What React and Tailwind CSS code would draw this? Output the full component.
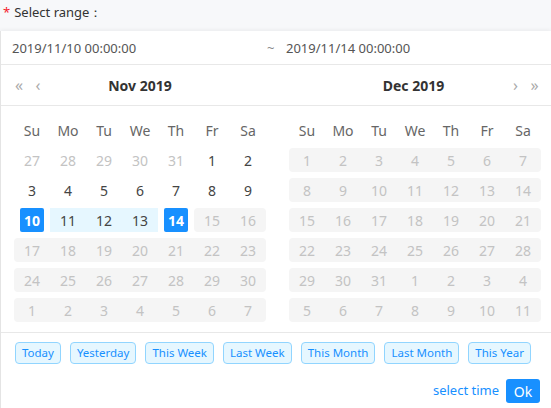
import React from 'react';

const WEEK = ['Su', 'Mo', 'Tu', 'We', 'Th', 'Fr', 'Sa'];

// cell kinds: n = normal, o = other month (light text), s = selected, r = in range, d = disabled
const nov = [
  [[27, 'o'], [28, 'o'], [29, 'o'], [30, 'o'], [31, 'o'], [1, 'n'], [2, 'n']],
  [[3, 'n'], [4, 'n'], [5, 'n'], [6, 'n'], [7, 'n'], [8, 'n'], [9, 'n']],
  [[10, 's'], [11, 'r'], [12, 'r'], [13, 'r'], [14, 's'], [15, 'd'], [16, 'd']],
  [[17, 'd'], [18, 'd'], [19, 'd'], [20, 'd'], [21, 'd'], [22, 'd'], [23, 'd']],
  [[24, 'd'], [25, 'd'], [26, 'd'], [27, 'd'], [28, 'd'], [29, 'd'], [30, 'd']],
  [[1, 'd'], [2, 'd'], [3, 'd'], [4, 'd'], [5, 'd'], [6, 'd'], [7, 'd']],
];

const decDays = [
  [1, 2, 3, 4, 5, 6, 7],
  [8, 9, 10, 11, 12, 13, 14],
  [15, 16, 17, 18, 19, 20, 21],
  [22, 23, 24, 25, 26, 27, 28],
  [29, 30, 31, 1, 2, 3, 4],
  [5, 6, 7, 8, 9, 10, 11],
];
const dec = decDays.map((r) => r.map((d) => [d, 'd']));

const shortcuts = ['Today', 'Yesterday', 'This Week', 'Last Week', 'This Month', 'Last Month', 'This Year'];

const Cell = ({ day, kind, prev, next }) => {
  if (kind === 's') {
    return (
      <div className="h-[30px] py-[3px] flex justify-center">
        <div className="w-[24px] h-[24px] rounded-[2px] bg-[#1890ff] text-white font-bold flex items-center justify-center">
          {day}
        </div>
      </div>
    );
  }
  if (kind === 'r') {
    return (
      <div className="h-[30px] py-[3px]">
        <div className="h-[24px] bg-[#e6f7ff] text-[#444] flex items-center justify-center">{day}</div>
      </div>
    );
  }
  if (kind === 'd') {
    const roundL = prev !== 'd' ? 'rounded-l-[4px]' : '';
    const roundR = next !== 'd' ? 'rounded-r-[4px]' : '';
    return (
      <div className="h-[30px] py-[3px]">
        <div className={`h-[24px] bg-[#f5f5f5] text-[#c3c3c3] flex items-center justify-center ${roundL} ${roundR}`}>
          {day}
        </div>
      </div>
    );
  }
  return (
    <div className={`h-[30px] flex items-center justify-center ${kind === 'o' ? 'text-[#c3c3c3]' : 'text-[#444]'}`}>
      {day}
    </div>
  );
};

const Calendar = ({ rows }) => (
  <div className="w-[252px]">
    <div className="grid grid-cols-7 h-[30px] text-[#666]">
      {WEEK.map((w) => (
        <div key={w} className="flex items-center justify-center">{w}</div>
      ))}
    </div>
    {rows.map((row, i) => (
      <div key={i} className="grid grid-cols-7">
        {row.map(([d, k], j) => (
          <Cell
            key={j}
            day={d}
            kind={k}
            prev={j > 0 ? row[j - 1][1] : null}
            next={j < 6 ? row[j + 1][1] : null}
          />
        ))}
      </div>
    ))}
  </div>
);

export default function App() {
  return (
    <div
      className="w-[551px] h-[408px] overflow-hidden bg-[#f7f8fa] text-[14px]"
      style={{ fontFamily: '"Noto Sans", "Open Sans", sans-serif' }}
    >
      <div className="h-[31px] flex items-center pl-[3px] pb-[6px] text-[13px] text-[#333]">
        <span className="text-[#f5222d] mr-[4px]">*</span>
        <span>Select range：</span>
      </div>

      <div className="bg-white border-l border-[#e4e4e4] h-[377px] shadow-[0_-1px_4px_rgba(0,0,0,0.06)]">
        {/* inputs */}
        <div className="h-[34px] pt-[3px] flex items-center border-b border-[#e8e8e8] text-[13px] text-[#555]">
          <span className="w-[266px] pl-[11px]">2019/11/10 00:00:00</span>
          <span className="w-[19px] text-[#888]">~</span>
          <span>2019/11/14 00:00:00</span>
        </div>

        {/* headers */}
        <div className="h-[41px] flex items-center border-b border-[#e8e8e8]">
          <div className="w-[275px] pl-[13px] relative flex items-center">
            <div className="absolute left-[13px] flex items-center gap-[9px] text-[#aaa] text-[16px]">
              <span className="w-[10px] text-center">«</span>
              <span className="w-[10px] text-center">‹</span>
            </div>
            <div className="w-[252px] text-center font-bold text-[#333]">Nov 2019</div>
          </div>
          <div className="w-[276px] pl-[12px] relative flex items-center">
            <div className="w-[252px] text-center font-bold text-[#333]">Dec 2019</div>
            <div className="absolute left-[235px] flex items-center gap-[9px] text-[#aaa] text-[16px]">
              <span className="w-[10px] text-center">›</span>
              <span className="w-[10px] text-center">»</span>
            </div>
          </div>
        </div>

        {/* calendars */}
        <div className="flex pt-[9px] pb-[7px] pl-[13px] gap-[23px] border-b border-[#e8e8e8]">
          <Calendar rows={nov} />
          <Calendar rows={dec} />
        </div>

        {/* shortcuts */}
        <div className="flex gap-[9px] pl-[14px] pt-[9px] text-[11.5px]">
          {shortcuts.map((s) => (
            <button
              key={s}
              className="h-[22px] px-[6px] rounded-[4px] border border-[#91d5ff] bg-[#e6f7ff] text-[#1890ff] leading-none whitespace-nowrap"
            >
              {s}
            </button>
          ))}
        </div>

        {/* footer */}
        <div className="flex items-center justify-end gap-[7px] pr-[11px] pt-[15px]">
          <span className="text-[13px] text-[#1890ff]">select time</span>
          <button className="h-[24px] w-[34px] rounded-[3px] bg-[#1890ff] text-white text-[14px]">Ok</button>
        </div>
      </div>
    </div>
  );
}
